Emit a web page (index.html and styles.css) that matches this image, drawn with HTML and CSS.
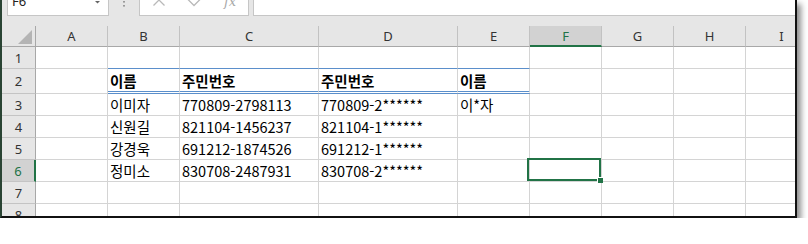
FILE: index.html
```html
<!DOCTYPE html>
<html lang="ko">
<head>
<meta charset="utf-8">
<title>Sheet</title>
<link rel="stylesheet" href="styles.css">
</head>
<body>
<div class="frame">
  <div class="fbar">
    <div class="namebox">
      <span class="nb-text">F6</span>
      <svg class="nb-arrow" width="5" height="3" viewBox="0 0 5 3"><polygon points="0,0 5,0 2.5,2.5" fill="#666"/></svg>
    </div>
    <svg class="grip" width="2" height="8" viewBox="0 0 2 8"><rect x="0" y="1" width="2" height="1.6" fill="#9a9a9a"/><rect x="0" y="5" width="2" height="1.6" fill="#9a9a9a"/></svg>
    <div class="funcbox">
      <svg width="108" height="15" viewBox="0 0 108 15">
        <path d="M13.5 -5.5 L24.5 5.5 M24.5 -5.5 L13.5 5.5" stroke="#b9b9b9" stroke-width="1.3" fill="none"/>
        <polyline points="47.5,-1 54,5.5 61.5,-2" stroke="#b9b9b9" stroke-width="1.3" fill="none"/>
        <text x="84" y="5.5" class="fx">fx</text>
      </svg>
    </div>
    <div class="formula"></div>
  </div>
  <div class="sheet">
    <div class="corner"><svg width="14" height="14" viewBox="0 0 14 14"><polygon points="14,0 14,14 0,14" fill="#b4b4b4"/></svg></div>
    <div class="ch">A</div><div class="ch">B</div><div class="ch">C</div><div class="ch">D</div><div class="ch">E</div><div class="ch sel">F</div><div class="ch">G</div><div class="ch">H</div><div class="ch">I</div>

    <div class="rh">1</div>
    <div class="c"></div><div class="c bt"></div><div class="c bt"></div><div class="c bt"></div><div class="c bt"></div><div class="c"></div><div class="c"></div><div class="c"></div><div class="c"></div>

    <div class="rh">2</div>
    <div class="c"></div><div class="c bd b">이름</div><div class="c bd b">주민번호</div><div class="c bd b">주민번호</div><div class="c bd b">이름</div><div class="c"></div><div class="c"></div><div class="c"></div><div class="c"></div>

    <div class="rh">3</div>
    <div class="c"></div><div class="c">이미자</div><div class="c">770809-2798113</div><div class="c">770809-2******</div><div class="c">이*자</div><div class="c"></div><div class="c"></div><div class="c"></div><div class="c"></div>

    <div class="rh">4</div>
    <div class="c"></div><div class="c">신원길</div><div class="c">821104-1456237</div><div class="c">821104-1******</div><div class="c"></div><div class="c"></div><div class="c"></div><div class="c"></div><div class="c"></div>

    <div class="rh">5</div>
    <div class="c"></div><div class="c">강경욱</div><div class="c">691212-1874526</div><div class="c">691212-1******</div><div class="c"></div><div class="c"></div><div class="c"></div><div class="c"></div><div class="c"></div>

    <div class="rh sel">6</div>
    <div class="c"></div><div class="c">정미소</div><div class="c">830708-2487931</div><div class="c">830708-2******</div><div class="c"></div><div class="c active"><div class="cursor"></div><div class="handle"></div></div><div class="c"></div><div class="c"></div><div class="c"></div>

    <div class="rh">7</div>
    <div class="c"></div><div class="c"></div><div class="c"></div><div class="c"></div><div class="c"></div><div class="c"></div><div class="c"></div><div class="c"></div><div class="c"></div>

    <div class="rh">8</div>
    <div class="c"></div><div class="c"></div><div class="c"></div><div class="c"></div><div class="c"></div><div class="c"></div><div class="c"></div><div class="c"></div><div class="c"></div>
  </div>
</div>
</body>
</html>
```

FILE: styles.css
```css
* { box-sizing: border-box; }

body {
  margin: 0;
  background: #ffffff;
}

.frame {
  width: 797px;
  height: 218px;
  border-left: 2px solid #2a4434;
  border-right: 2px solid #111111;
  border-bottom: 2px solid #111111;
  box-shadow: 4px 4px 6px rgba(0, 0, 0, 0.45);
  overflow: hidden;
  background: #e6e6e6;
}

.fbar {
  height: 26px;
  display: flex;
  align-items: flex-start;
  font-family: "Noto Sans", sans-serif;
}

.namebox {
  margin-left: 5px;
  width: 102px;
  height: 16px;
  background: #ffffff;
  border: 1px solid #c6c6c6;
  border-top: 0;
  display: flex;
  align-items: flex-end;
  padding-left: 4px;
}

.nb-text {
  font-size: 13px;
  line-height: 13px;
  color: #222222;
  margin-bottom: 7px;
}

.nb-arrow {
  align-self: flex-start;
  margin-left: auto;
  margin-right: 8px;
  margin-top: 1px;
}

.grip {
  margin-left: 14px;
}

.funcbox {
  margin-left: 14px;
  width: 110px;
  height: 16px;
  background: #ffffff;
  border: 1px solid #c6c6c6;
  border-top: 0;
  display: flex;
}

.fx {
  font-family: "DejaVu Serif", serif;
  font-style: italic;
  font-size: 13px;
  fill: #a8a8a8;
}

.formula {
  margin-left: 4px;
  flex: 1;
  height: 16px;
  background: #ffffff;
  border-left: 1px solid #c6c6c6;
  border-bottom: 1px solid #c6c6c6;
}

.sheet {
  display: grid;
  grid-template-columns: 34px 72px 72px 139px 139px 72px 72px 72px 72px 72px;
  grid-template-rows: 21px 22px 25px 22px 22px 22px 22px 22px 22px;
  background: #ffffff;
}

.corner {
  background: #e6e6e6;
  border-right: 1px solid #a8a8a8;
  border-bottom: 1px solid #a8a8a8;
  display: flex;
  justify-content: flex-end;
  align-items: flex-end;
  padding: 0 3px 2px 0;
}

.ch {
  background: #e6e6e6;
  border-right: 1px solid #c2c2c2;
  border-bottom: 1px solid #a8a8a8;
  display: flex;
  align-items: center;
  justify-content: center;
  font-family: "Noto Sans", sans-serif;
  font-size: 13px;
  color: #333333;
}

.ch.sel {
  background: #d2d2d2;
  border-bottom: 2px solid #217346;
  color: #217346;
}

.rh {
  background: #e6e6e6;
  border-right: 1px solid #a8a8a8;
  border-bottom: 1px solid #c4c4c4;
  display: flex;
  align-items: center;
  justify-content: center;
  font-family: "Noto Sans", sans-serif;
  font-size: 13px;
  color: #333333;
}

.rh.sel {
  background: #d2d2d2;
  border-right: 2px solid #217346;
  color: #217346;
}

.c {
  border-right: 1px solid #d4d4d4;
  border-bottom: 1px solid #d4d4d4;
  display: flex;
  align-items: center;
  padding-left: 2px;
  font-family: "Noto Sans CJK KR", sans-serif;
  font-size: 14.5px;
  color: #000000;
  white-space: nowrap;
}

.c.bt {
  border-bottom-color: #5b8fcb;
}

.c.bd {
  border-bottom: 3px double #5b8fcb;
}

.c.b {
  font-weight: bold;
}

.c.active {
  position: relative;
}

.cursor {
  position: absolute;
  left: -3px;
  top: -2px;
  right: 0;
  bottom: 0;
  border: 2px solid #217346;
}

.handle {
  position: absolute;
  right: -2px;
  bottom: -2px;
  width: 6px;
  height: 6px;
  background: #217346;
  border-left: 1px solid #ffffff;
  border-top: 1px solid #ffffff;
}
```
